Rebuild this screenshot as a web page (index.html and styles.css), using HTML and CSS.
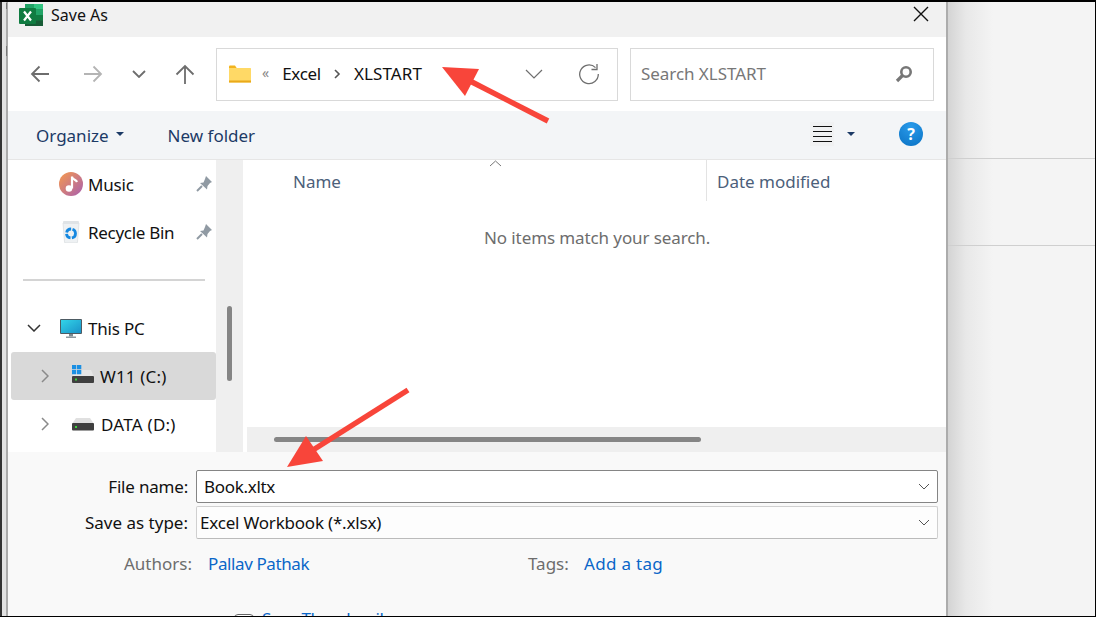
FILE: index.html
```html
<!DOCTYPE html>
<html lang="en">
<head>
<meta charset="utf-8">
<title>Save As</title>
<link rel="stylesheet" href="styles.css">
</head>
<body>
<div class="screen">
  <div class="edge"></div>
  <div class="dialog">
    <header class="titlebar">
      <svg class="excel" width="24" height="22" viewBox="0 0 24 22">
        <rect x="6" width="18" height="22" rx="1" fill="#1d7a45"/>
        <rect x="15" width="9" height="5.500" fill="#33c481"/>
        <rect x="6" width="9" height="5.500" fill="#21a366"/>
        <rect x="15" y="5.500" width="9" height="5.500" fill="#21a366"/>
        <rect x="15" y="11" width="9" height="5.500" fill="#107c41"/>
        <rect x="6" y="16.500" width="18" height="5.500" fill="#185c37"/>
        <rect y="4" width="17" height="16" rx="1" fill="#107c41"/>
        <path d="M5 7.500l7 9M12 7.500l-7 9" stroke="#fff" stroke-width="2.200" fill="none"/>
      </svg>
      <span class="title">Save As</span>
      <svg class="close" width="16" height="16" viewBox="0 0 16 16"><path d="M1 1l14 14M15 1L1 15" stroke="#111" stroke-width="1.400" fill="none"/></svg>
    </header>

    <nav class="navbar">
      <div class="navbtns">
        <svg width="20" height="18" viewBox="0 0 20 18"><path d="M19 9H2M9.500 1.500L2 9l7.500 7.500" stroke="#6d6d6d" stroke-width="1.800" fill="none"/></svg>
        <svg width="20" height="18" viewBox="0 0 20 18"><path d="M1 9h17M10.500 1.500L18 9l-7.500 7.500" stroke="#b4b4b4" stroke-width="1.800" fill="none"/></svg>
        <svg width="14" height="8" viewBox="0 0 14 8"><path d="M1 1l6 6 6-6" stroke="#6d6d6d" stroke-width="1.800" fill="none"/></svg>
        <svg width="20" height="20" viewBox="0 0 20 20"><path d="M10 20V2M1.500 10.500L10 2l8.500 8.500" stroke="#6d6d6d" stroke-width="1.800" fill="none"/></svg>
      </div>
      <div class="address">
        <svg class="folder" width="22" height="18" viewBox="0 0 22 18">
          <path d="M0 1.500q0-1 1-1h5l2 3H0z" fill="#f2b31e"/>
          <rect y="3" width="22" height="14.500" rx=".5" fill="#ffd966"/>
          <rect y="15.500" width="22" height="2" fill="#eaa91a"/>
        </svg>
        <span class="dbl">«</span>
        <span class="crumb">Excel</span>
        <svg class="sep" width="7" height="10" viewBox="0 0 7 10"><path d="M1 1l4 4-4 4" stroke="#555" stroke-width="1.600" fill="none"/></svg>
        <span class="crumb crumb-last">XLSTART</span>
        <svg class="addr-chev" width="18" height="10" viewBox="0 0 18 10"><path d="M1 1l8 8 8-8" stroke="#6f6f6f" stroke-width="1.200" fill="none"/></svg>
        <svg class="refresh" width="22" height="22" viewBox="0 0 22 22"><path d="M17.500 4.600A9.300 9.300 0 1 0 20.300 11" stroke="#6f6f6f" stroke-width="1.300" fill="none"/><path d="M19 1v5.500h-5.500" stroke="#6f6f6f" stroke-width="1.300" fill="none"/></svg>
      </div>
      <div class="search">
        <span class="search-text">Search XLSTART</span>
        <svg width="18" height="18" viewBox="0 0 18 18"><circle cx="11" cy="7" r="4.700" fill="none" stroke="#777" stroke-width="2.600"/><path d="M7.500 10.500L2 16" stroke="#777" stroke-width="3.200" fill="none"/></svg>
      </div>
    </nav>

    <div class="toolbar">
      <span class="tool">Organize</span>
      <span class="caret caret-org"></span>
      <span class="tool newfolder">New folder</span>
      <span class="viewbtn">
        <svg width="19" height="16" viewBox="0 0 19 16"><path d="M0 .5h19M0 5.500h19M0 10.500h19M0 15.500h19" stroke="#111" stroke-width="1" fill="none"/></svg>
      </span>
      <span class="caret caret-view"></span>
      <span class="help">?</span>
    </div>

    <div class="main">
      <aside class="tree">
        <div class="row">
          <svg class="i-music" width="24" height="24" viewBox="0 0 24 24">
            <defs><linearGradient id="mg" x1="0" y1="0" x2="1" y2="1"><stop offset="0" stop-color="#f79a4c"/><stop offset="1" stop-color="#a85fb0"/></linearGradient></defs>
            <circle cx="12" cy="12" r="12" fill="url(#mg)"/>
            <path d="M13 4.500v12" stroke="#fff" stroke-width="2.200" fill="none"/>
            <path d="M13 5c1 3 4 2.500 5 5" stroke="#fff" stroke-width="2.200" fill="none"/>
            <circle cx="10" cy="16.500" r="3.300" fill="#fff"/>
          </svg>
          <span class="label">Music</span>
          <svg class="pin" width="16" height="16" viewBox="0 0 16 16"><path d="M10 0l6 6-2 1-2.500 3-.5 3.500L4 7l3.500-.5L9 3z" fill="#909aa3"/><path d="M6 10l-5 5" stroke="#909aa3" stroke-width="2" fill="none"/></svg>
        </div>
        <div class="row">
          <svg class="i-bin" width="18" height="22" viewBox="0 0 18 22">
            <path d="M1 2h16l-1.500 19a1 1 0 0 1-1 1h-11a1 1 0 0 1-1-1z" fill="#eef1f3" stroke="#d3d7da" stroke-width=".6"/>
            <rect x="1" y="0" width="16" height="3" rx="1" fill="#dfe3e6"/>
            <circle cx="9" cy="12.500" r="4.500" fill="none" stroke="#1688e0" stroke-width="2.800" stroke-dasharray="6 1.400"/>
          </svg>
          <span class="label">Recycle Bin</span>
          <svg class="pin" width="16" height="16" viewBox="0 0 16 16"><path d="M10 0l6 6-2 1-2.500 3-.5 3.500L4 7l3.500-.5L9 3z" fill="#909aa3"/><path d="M6 10l-5 5" stroke="#909aa3" stroke-width="2" fill="none"/></svg>
        </div>
        <div class="divider"></div>
        <div class="row row-pc">
          <svg class="chev-down" width="14" height="8" viewBox="0 0 14 8"><path d="M1 1l6 6 6-6" stroke="#333" stroke-width="1.500" fill="none"/></svg>
          <svg class="i-pc" width="22" height="19" viewBox="0 0 22 19">
            <defs><linearGradient id="pg" x1="0" y1="0" x2="1" y2="1"><stop offset="0" stop-color="#32d4e8"/><stop offset="1" stop-color="#1a93c9"/></linearGradient></defs>
            <rect width="22" height="15" rx="1" fill="#4d5b63"/>
            <rect x="1" y="1" width="20" height="13" fill="url(#pg)"/>
            <rect x="9" y="15" width="4" height="2.500" fill="#7e8a90"/>
            <rect x="6" y="17.500" width="10" height="1.500" fill="#8d999f"/>
          </svg>
          <span class="label">This PC</span>
        </div>
        <div class="row row-drive selected">
          <svg class="chev-right" width="8" height="14" viewBox="0 0 8 14"><path d="M1 1l6 6-6 6" stroke="#8a8a8a" stroke-width="1.500" fill="none"/></svg>
          <svg class="i-drive" width="22" height="18" viewBox="0 0 22 18">
            <path d="M3 5h16l3 7H0z" fill="#e6e6e6"/>
            <rect y="11" width="22" height="7" rx="1" fill="#3f3f3f"/>
            <rect x="3" y="13.500" width="2" height="2" fill="#3bd13b"/>
            <path d="M0 0h4.300v4.300H0zM5 0h4.300v4.300H5zM0 5h4.300v4.300H0zM5 5h4.300v4.300H5z" fill="#1a8fe3"/>
          </svg>
          <span class="label">W11 (C:)</span>
        </div>
        <div class="row row-drive">
          <svg class="chev-right" width="8" height="14" viewBox="0 0 8 14"><path d="M1 1l6 6-6 6" stroke="#8a8a8a" stroke-width="1.500" fill="none"/></svg>
          <svg class="i-drive" width="22" height="14" viewBox="0 0 22 14">
            <path d="M4 1h14l4 6H0z" fill="#e0e0e0"/>
            <rect y="6" width="22" height="7.500" rx="1" fill="#3f3f3f"/>
            <rect x="3" y="9" width="2" height="2" fill="#3bd13b"/>
          </svg>
          <span class="label label-data">DATA (D:)</span>
        </div>
      </aside>
      <div class="vscroll"><div class="vthumb"></div></div>
      <section class="files">
        <div class="colhead">
          <div class="col-name">
            <span>Name</span>
            <svg class="sort" width="13" height="7" viewBox="0 0 13 7"><path d="M1 6l5.500-5L12 6" stroke="#777" stroke-width="1" fill="none"/></svg>
          </div>
          <div class="col-date">Date modified</div>
        </div>
        <p class="empty">No items match your search.</p>
        <div class="hscroll"><div class="hthumb"></div></div>
      </section>
    </div>

    <footer class="footer">
      <div class="field">
        <label class="flabel flabel-name">File name:</label>
        <div class="combo combo-active"><span>Book.xltx</span>
          <svg width="12" height="7" viewBox="0 0 12 7"><path d="M1 1l5 5 5-5" stroke="#555" stroke-width="1" fill="none"/></svg>
        </div>
      </div>
      <div class="field">
        <label class="flabel">Save as type:</label>
        <div class="combo combo-type"><span>Excel Workbook (*.xlsx)</span>
          <svg width="12" height="7" viewBox="0 0 12 7"><path d="M1 1l5 5 5-5" stroke="#555" stroke-width="1" fill="none"/></svg>
        </div>
      </div>
      <div class="meta">
        <span class="mlabel">Authors:</span>
        <a class="mlink mlink-author">Pallav Pathak</a>
        <span class="mlabel">Tags:</span>
        <a class="mlink mlink-tag">Add a tag</a>
      </div>
      <div class="thumbrow">
        <span class="check"></span>
        <span class="thumbtext">Save Thumbnail</span>
      </div>
    </footer>
  </div>

  <div class="backdrop">
    <div class="band band-a"></div>
    <div class="band band-b"></div>
    <div class="band band-c"></div>
  </div>

  <svg class="arrows" width="1096" height="617" viewBox="0 0 1096 617">
    <path d="M548 121L470 81" stroke="#f8453a" stroke-width="5.500" fill="none"/>
    <path d="M442 67L479 69L465 96Z" fill="#f8453a"/>
    <path d="M408 390L313 450" stroke="#f8453a" stroke-width="5.500" fill="none"/>
    <path d="M287 467L306 436L323 461Z" fill="#f8453a"/>
  </svg>
</div>
</body>
</html>
```
FILE: styles.css
```css
* { box-sizing: border-box; }
html, body { margin: 0; padding: 0; }
body {
  width: 1096px;
  height: 617px;
  overflow: hidden;
  font-family: "Noto Sans", "Open Sans", sans-serif;
  font-size: 17px;
  color: #111;
}
.screen {
  position: relative;
  display: flex;
  width: 1096px;
  height: 617px;
  border-top: 2px solid #000;
  border-bottom: 1px solid #000;
  background: #f4f4f4;
  overflow: hidden;
}
.edge {
  flex: 0 0 8px;
  background:
    linear-gradient(#777, #777) 6px 1px / 1px 6px no-repeat,
    linear-gradient(#777, #777) 6px 44px / 1px 10px no-repeat,
    linear-gradient(90deg, #333 0, #333 2px, #e2e2e2 2px, #e2e2e2 6px, #aaa 6px, #aaa 8px);
}
.dialog {
  flex: 0 0 940px;
  display: flex;
  flex-direction: column;
  border-right: 2px solid #acacac;
  background: #fff;
  height: 100%;
  overflow: hidden;
}

/* title bar */
.titlebar {
  flex: 0 0 35px;
  display: flex;
  align-items: center;
  padding: 0 17px 0 11px;
  background: #f1f1f1;
}
.excel { margin-top: -9px; }
.title { margin-left: 8px; font-size: 16px; margin-top: -9px; }
.close { margin-left: auto; margin-top: -11px; }

/* nav */
.navbar {
  flex: 0 0 74px;
  display: flex;
  align-items: center;
  padding: 0 12px 0 0;
  background: #fff;
}
.navbtns {
  flex: 0 0 208px;
  display: flex;
  align-items: center;
  padding-left: 22px;
}
.navbtns svg:nth-child(1) { margin-right: 33px; }
.navbtns svg:nth-child(2) { margin-right: 29px; }
.navbtns svg:nth-child(3) { margin-right: 29px; }
.address, .search {
  height: 53px;
  display: flex;
  align-items: center;
  border: 1.500px solid #d9d9d9;
  background: #fff;
}
.address { flex: 0 0 402px; padding: 0 17px 0 12px; }
.folder { margin-right: 11px; }
.dbl { color: #888; font-size: 14px; margin-right: 13px; margin-top: -3px; }
.crumb { font-size: 17px; letter-spacing: -.3px; margin-top: -2px; }
.crumb-last { letter-spacing: .1px; }
.sep { margin: 0 13px 0 13px; }
.addr-chev { margin-left: auto; margin-right: 35px; }
.search { flex: 0 0 304px; margin-left: 12px; padding: 0 20px 0 10px; justify-content: space-between; }
.search-text { color: #777; letter-spacing: -.05px; margin-top: -1px; }

/* toolbar */
.toolbar {
  flex: 0 0 49px;
  display: flex;
  align-items: center;
  padding: 0 23px 0 28px;
  background: #f3f5f7;
  border-bottom: 1px solid #e6e6e6;
}
.tool { color: #1c3a66; }
.newfolder { margin-left: 44px; }
.caret {
  width: 0;
  height: 0;
  border-left: 4px solid transparent;
  border-right: 4px solid transparent;
  border-top: 4px solid #1c3a66;
}
.caret-org { margin-left: 7px; margin-top: -2px; }
.viewbtn {
  margin-left: auto;
  display: flex;
  align-items: center;
  justify-content: center;
  width: 24px;
  height: 24px;
  margin-top: -2px;
  background: #f0f1f2;
}
.caret-view { margin-left: 13px; margin-top: -2px; }
.help {
  margin-left: 44px;
  margin-top: -2px;
  width: 24px;
  height: 24px;
  border-radius: 50%;
  background: radial-gradient(circle at 50% 20%, #2a9bea, #0a72c4);
  color: #fff;
  font-size: 16px;
  font-weight: 700;
  line-height: 24px;
  text-align: center;
}

/* main */
.main {
  flex: 0 0 292px;
  display: flex;
  overflow: hidden;
  background: #fff;
}
.tree {
  flex: 0 0 208px;
  display: flex;
  flex-direction: column;
  background: #fff;
  overflow: hidden;
}
.row {
  flex: 0 0 48px;
  position: relative;
  display: flex;
  align-items: center;
  padding-left: 51px;
}
.label { font-size: 17px; letter-spacing: -.2px; margin-left: 9px; }
.i-music { margin-right: -4px; }
.i-bin { margin-left: 3px; margin-right: -1px; }
.i-bin + .label { letter-spacing: -.3px; }
.pin { margin-left: auto; margin-right: 4px; }
.divider {
  flex: 0 0 48px;
  margin: 0 11px 0 15px;
  background: linear-gradient(#d4d4d4, #d4d4d4) center / 100% 2px no-repeat;
}
.row-pc { padding-left: 19px; }
.i-pc { margin-left: 19px; margin-right: -3px; }
.row-drive { padding-left: 30px; margin-left: 3px; border-radius: 3px; }
.selected { background: #d9d9d9; }
.i-drive { margin-left: 23px; margin-right: -3px; }
.selected .i-drive { margin-top: -4px; }
.row-drive .label { letter-spacing: .15px; }
.row-drive .label-data { letter-spacing: .25px; margin-left: 10px; }

.vscroll {
  flex: 0 0 27px;
  background: #efefef;
  padding: 146px 0 0 11px;
}
.vthumb { width: 5px; height: 75px; border-radius: 3px; background: #858585; }

.files {
  flex: 1;
  display: flex;
  flex-direction: column;
  margin-left: 4px;
  background: #fff;
  min-width: 0;
}
.colhead {
  flex: 0 0 41px;
  display: flex;
  color: #4c607a;
}
.col-name {
  position: relative;
  flex: 0 0 460px;
  padding: 10px 0 0 46px;
  border-right: 1px solid #e3e3e3;
}
.sort { position: absolute; left: 242px; top: 0; }
.col-date { padding: 10px 0 0 10px; }
.empty {
  flex: 1;
  margin: 25px 0 0;
  padding-left: 237px;
  color: #6d6d6d;
  letter-spacing: -.1px;
}
.hscroll {
  flex: 0 0 25px;
  background: #efefef;
  padding: 10px 0 0 27px;
}
.hthumb { width: 427px; height: 5px; border-radius: 3px; background: #858585; }

/* footer */
.footer {
  flex: 1;
  display: flex;
  flex-direction: column;
  gap: 3px;
  padding: 18px 8px 0 0;
  background: #f9f9f9;
  overflow: hidden;
}
.field {
  display: flex;
  align-items: center;
}
.flabel {
  flex: 0 0 180px;
  text-align: right;
  margin-right: 8px;
}
.flabel-name { letter-spacing: -.2px; }
.combo {
  flex: 1;
  height: 33px;
  display: flex;
  align-items: center;
  justify-content: space-between;
  border-radius: 2px;
  padding: 0 7px 0 7px;
}
.combo-active { background: #fff; border: 1px solid #858585; letter-spacing: -.3px; }
.combo-type { background: #fdfdfd; border: 1px solid #d0d0d0; border-bottom-color: #bbb; padding-left: 3px; letter-spacing: -.2px; }
.meta {
  display: grid;
  grid-template-columns: 84px 320px 56px auto;
  margin: 10px 0 0 116px;
  height: 26px;
  align-items: center;
}
.mlabel { color: #6d6d6d; }
.mlink { color: #0a66c8; }
.mlink-author { letter-spacing: -.4px; }
.mlink-tag { letter-spacing: .3px; }
.thumbrow {
  display: flex;
  align-items: flex-start;
  margin: 36px 0 0 226px;
  height: 30px;
}
.check {
  width: 20px;
  height: 20px;
  border: 1px solid #666;
  border-radius: 4px;
  background: #fff;
  flex: none;
}
.thumbtext { margin-left: 8px; color: #0a66c8; line-height: 20px; margin-top: -5px; letter-spacing: -.4px; }

/* background window */
.backdrop {
  flex: 1;
  display: flex;
  flex-direction: column;
  border-right: 1px solid #000;
  background: linear-gradient(90deg, #d4d4d4 0, #e8e8e8 18px, #f4f4f4 45px);
}
.band { flex: 0 0 87px; border-bottom: 1px solid #cfcfcf; }
.band-a { flex-basis: 157px; }
.band-c { flex: 1; border-bottom: 0; }

.arrows { position: absolute; left: 0; top: -2px; pointer-events: none; }
```
